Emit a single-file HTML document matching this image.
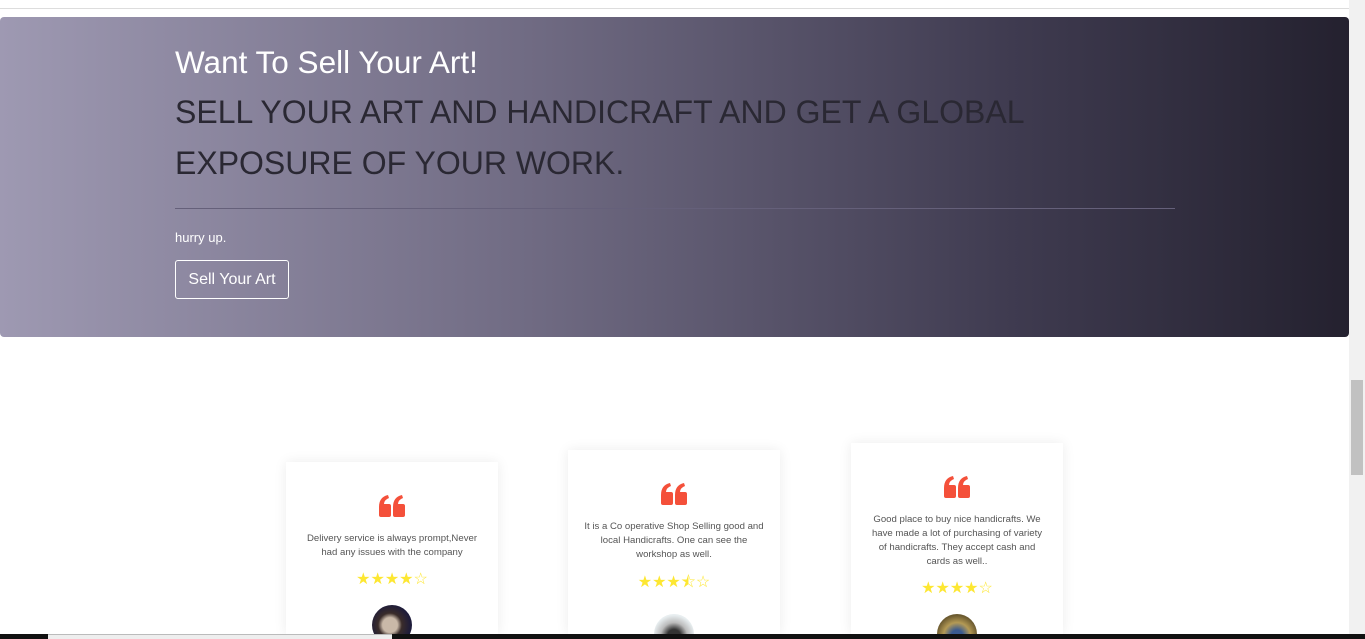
<!DOCTYPE html>
<html><head><style>
*{margin:0;padding:0;box-sizing:border-box}
html,body{width:1365px;height:639px;overflow:hidden}
body{background:#fff;font-family:"Liberation Sans",Arial,sans-serif;position:relative}
.wrap{position:absolute;left:0;top:0;width:1365px;height:634px;overflow:hidden}
.topline{position:absolute;left:0;top:8px;width:1349px;height:1px;background:#ddd}
.banner{position:absolute;left:0;top:17px;width:1349px;height:320px;border-radius:4px;background:linear-gradient(90deg,#9e99b2 0%,#6f6a82 40%,#3f3b50 75%,#24212f 100%)}
.h1{position:absolute;left:175px;top:44px;font-size:31.5px;color:#fff}
.h2{position:absolute;left:175px;top:87px;font-size:32px;line-height:51px;color:#2a2833;width:900px}
.hr{position:absolute;left:175px;top:208px;width:1000px;height:1px;background:#65607a}
.hurry{position:absolute;left:175px;top:230px;font-size:13px;color:#fff}
.btn{position:absolute;left:175px;top:260px;width:114px;height:39px;border:1px solid #fff;border-radius:3px;color:#fff;font-size:16px;text-align:center;line-height:37px}
.card{position:absolute;width:212px;background:#fff;box-shadow:0 0 12px rgba(0,0,0,.08);text-align:center;overflow:hidden}
.q{margin-top:33px;height:22px;display:block;margin-left:auto;margin-right:auto}
.t{font-size:9.6px;line-height:14px;color:#555;padding:0 17px;margin-top:15px}
.s{color:#fde732;font-size:16px;margin-top:9px}
.av{width:40px;height:40px;border-radius:50%;margin:16px auto 0}
.sb{position:absolute;right:0;top:0;width:16px;height:634px;background:#f1f1f1}
.th{position:absolute;right:2px;top:380px;width:12px;height:95px;background:#c1c1c1}
.bb{position:absolute;left:0;top:634px;width:1365px;height:5px;background:#111}
.bg{position:absolute;left:48px;top:634px;width:344px;height:5px;background:#eee;border-top:1px solid #bbb}
</style></head><body>
<div class="wrap">
<div class="topline"></div>
<div class="banner"></div>
<div class="h1">Want To Sell Your Art!</div>
<div class="h2">SELL YOUR ART AND HANDICRAFT AND GET A GLOBAL EXPOSURE OF YOUR WORK.</div>
<div class="hr"></div>
<div class="hurry">hurry up.</div>
<div class="btn">Sell Your Art</div>

<div class="card" style="left:286px;top:462px;height:172px">
<svg class="q" width="26" height="22" viewBox="0 0 26 22"><path fill="#f4503a" d="M0 12Q0 2 9 0L10 3Q5 5 5 9L10 9Q12 9 12 11L12 20Q12 22 10 22L2 22Q0 22 0 20Z M14 12Q14 2 23 0L24 3Q19 5 19 9L24 9Q26 9 26 11L26 20Q26 22 24 22L16 22Q14 22 14 20Z"/></svg>
<div class="t">Delivery service is always prompt,Never had any issues with the company</div>
<div class="s">★★★★☆</div>
<div class="av" style="background:radial-gradient(circle at 45% 50%,#c9b8a8 0 25%,#3a2c2a 40%,#1d1b3a 70%)"></div>
</div>
<div class="card" style="left:568px;top:450px;height:184px">
<svg class="q" width="26" height="22" viewBox="0 0 26 22"><path fill="#f4503a" d="M0 12Q0 2 9 0L10 3Q5 5 5 9L10 9Q12 9 12 11L12 20Q12 22 10 22L2 22Q0 22 0 20Z M14 12Q14 2 23 0L24 3Q19 5 19 9L24 9Q26 9 26 11L26 20Q26 22 24 22L16 22Q14 22 14 20Z"/></svg>
<div class="t" style="padding:0 14px">It is a Co operative Shop Selling good and local Handicrafts. One can see the workshop as well.</div>
<div class="s">★★★⯪☆</div>
<div class="av" style="background:radial-gradient(circle at 50% 55%,#333 0 22%,#bbb 45%,#e8eef0 70%)"></div>
</div>
<div class="card" style="left:851px;top:443px;height:191px">
<svg class="q" width="26" height="22" viewBox="0 0 26 22"><path fill="#f4503a" d="M0 12Q0 2 9 0L10 3Q5 5 5 9L10 9Q12 9 12 11L12 20Q12 22 10 22L2 22Q0 22 0 20Z M14 12Q14 2 23 0L24 3Q19 5 19 9L24 9Q26 9 26 11L26 20Q26 22 24 22L16 22Q14 22 14 20Z"/></svg>
<div class="t">Good place to buy nice handicrafts. We have made a lot of purchasing of variety of handicrafts. They accept cash and cards as well..</div>
<div class="s">★★★★☆</div>
<div class="av" style="background:radial-gradient(circle at 50% 55%,#3a5a90 0 20%,#b49a55 45%,#6b5a30 70%)"></div>
</div>
<div class="sb"></div><div class="th"></div>
</div>
<div class="bb"></div><div class="bg"></div>
</body></html>
